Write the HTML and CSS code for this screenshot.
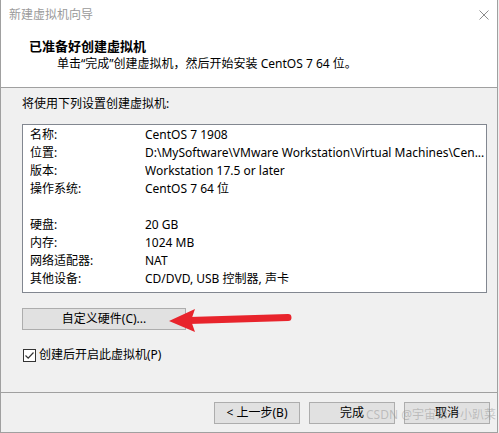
FILE: index.html
```html
<!DOCTYPE html>
<html lang="zh-CN">
<head>
    <meta charset="UTF-8">
    <title>新建虚拟机向导</title>
    <link rel="stylesheet" href="styles.css">
</head>
<body>

<div class="wizard">
    <div class="header">
        <div class="titlebar">
            <span class="title">新建虚拟机向导</span>
            <svg class="close" width="10" height="10" viewBox="0 0 10 10">
                <path d="M0.5 0.5 L9.5 9.5 M9.5 0.5 L0.5 9.5" stroke="#8c8c8c" stroke-width="1" fill="none"/>
            </svg>
        </div>
        <h1>已准备好创建虚拟机</h1>
        <p class="subtitle">单击“完成”创建虚拟机，然后开始安装 CentOS 7 64 位。</p>
    </div>

    <div class="content">
        <p class="intro">将使用下列设置创建虚拟机:</p>
        <div class="summary">
            <div class="row"><span class="key">名称:</span><span class="val">CentOS 7 1908</span></div>
            <div class="row"><span class="key">位置:</span><span class="val">D:\MySoftware\VMware Workstation\Virtual Machines\Cen...</span></div>
            <div class="row"><span class="key">版本:</span><span class="val">Workstation 17.5 or later</span></div>
            <div class="row"><span class="key">操作系统:</span><span class="val">CentOS 7 64 位</span></div>
            <div class="row"></div>
            <div class="row"><span class="key">硬盘:</span><span class="val">20 GB</span></div>
            <div class="row"><span class="key">内存:</span><span class="val">1024 MB</span></div>
            <div class="row"><span class="key">网络适配器:</span><span class="val">NAT</span></div>
            <div class="row"><span class="key">其他设备:</span><span class="val">CD/DVD, USB 控制器, 声卡</span></div>
        </div>

        <div class="custom">
            <button class="btn btn-custom">自定义硬件(C)...</button>
            <!-- pointer drawn over the dialog -->
            <svg class="arrow" width="140" height="36" viewBox="0 0 140 36">
                <path d="M28 19.5 L127 16.5" stroke="#e8242c" stroke-width="7" stroke-linecap="round" fill="none"/>
                <path d="M8 20 L34 8 L30 19.5 L34 31 Z" fill="#e8242c"/>
            </svg>
        </div>

        <label class="check">
            <span class="box">
                <svg width="11" height="11" viewBox="0 0 11 11">
                    <path d="M1.5 5.5 L4.2 8.2 L9.5 2.5" stroke="#333" stroke-width="1.2" fill="none"/>
                </svg>
            </span>
            创建后开启此虚拟机(P)
        </label>
    </div>

    <div class="footer">
        <button class="btn">&lt; 上一步(B)</button>
        <button class="btn">完成</button>
        <button class="btn">取消</button>
    </div>

    <div class="watermark">CSDN @宇宙第一小趴菜</div>
</div>

</body>
</html>
```

FILE: styles.css
```css
body {
    margin: 0;
    background-color: #f0f0f0;
    font-family: "Noto Sans", "Noto Sans CJK SC", sans-serif;
    font-size: 12px;
    color: #000;
}

.wizard {
    position: relative;
    width: 496px;
    height: 432px;
    border: 1px solid #a0a0a0;
    border-top: none;
    display: flex;
    flex-direction: column;
    background-color: #f0f0f0;
}

/* white banner on top */
.header {
    height: 87px;
    background-color: #fff;
    border-bottom: 1px solid #a0a0a0;
}

.titlebar {
    height: 30px;
    display: flex;
    align-items: center;
    justify-content: space-between;
    padding: 0 8px 0 8px;
}

.title {
    color: #9a9a9a;
    line-height: 16px;
}

.close {
    margin-top: -1px;
}

h1 {
    margin: 8px 0 0 28px;
    font-size: 13px;
    line-height: 17px;
    font-weight: bold;
}

.subtitle {
    margin: 0 0 0 56px;
    line-height: 17px;
}

.content {
    flex: 1;
    padding: 8px 0 0 21px;
}

.intro {
    margin: 0;
    line-height: 16px;
}

.summary {
    margin-top: 12px;
    width: 463px;
    height: 166px;
    border: 1px solid #828790;
    background-color: #fff;
    padding: 1px 0 0 7px;
    box-sizing: content-box;
    width: 456px;
}

.row {
    display: flex;
    height: 18px;
    line-height: 18px;
    white-space: nowrap;
}

.key {
    width: 115px;
    flex-shrink: 0;
}

.val {
    overflow: hidden;
}

.btn {
    font-family: "Noto Sans", "Noto Sans CJK SC", sans-serif;
    font-size: 12px;
    color: #000;
    background-color: #e1e1e1;
    border: 1px solid #adadad;
    height: 22px;
    width: 86px;
    padding: 0;
    line-height: 18px;
    margin: 0;
}

.custom {
    position: relative;
    margin-top: 15px;
    height: 22px;
}

.btn-custom {
    width: 164px;
}

.arrow {
    position: absolute;
    left: 139px;
    top: -7px;
}

.check {
    display: flex;
    align-items: center;
    margin-top: 17px;
    line-height: 16px;
}

.box {
    width: 11px;
    height: 11px;
    border: 1px solid #333;
    background-color: #fff;
    margin: 1px 3px 0 1px;
    display: flex;
}

.footer {
    height: 39px;
    border-top: 1px solid #a0a0a0;
    display: flex;
    justify-content: flex-end;
    gap: 9px;
    padding: 9px 7px 0 0;
    box-sizing: border-box;
    height: 40px;
}

.watermark {
    position: absolute;
    right: 1px;
    bottom: 9px;
    color: rgba(140, 140, 140, 0.45);
    font-size: 12px;
    white-space: nowrap;
}
```
